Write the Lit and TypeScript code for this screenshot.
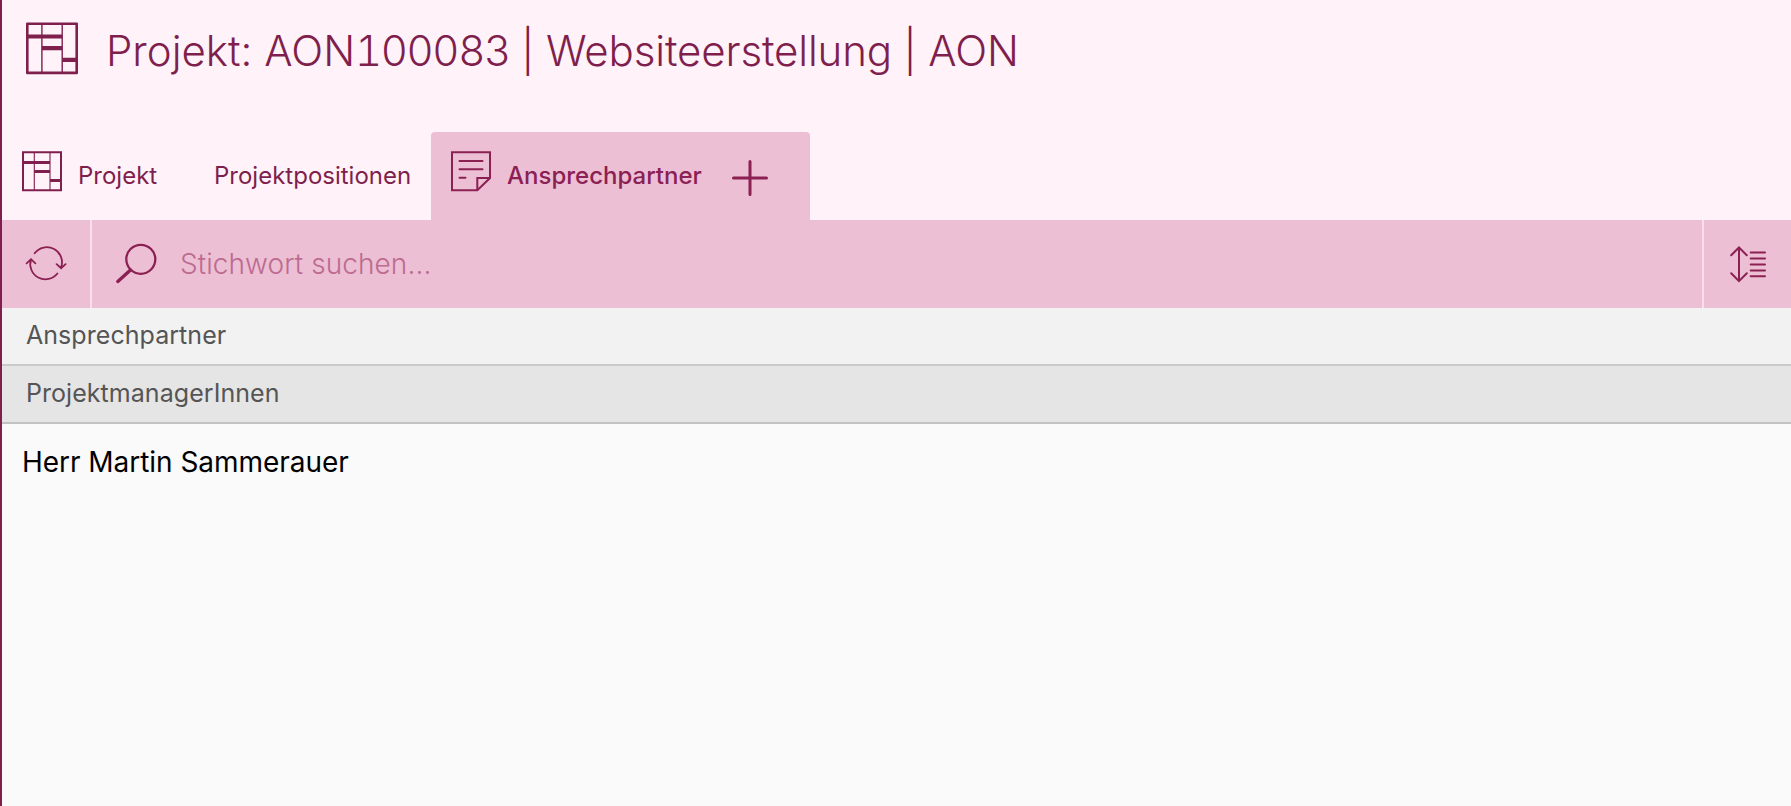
import { LitElement, html, css } from "lit";
import { customElement } from "lit/decorators.js";

const projectIcon = html`<svg viewBox="0 0 40 41" width="40" height="41">
  <path d="M1 1.2H39V39.3H1Z" stroke-width="2"/><path d="M12.3 1V39M28 1V39" stroke-width="1.1"/>
  <path d="M1 11.5H28M12.3 20.5H28M28 29.5H39" stroke-width="3"/></svg>`;

const projectIconLarge = html`<svg viewBox="0 0 52 53" width="52" height="53">
  <path d="M1.3 1.7H50.7V50.9H1.3Z" stroke-width="2.6" stroke-linejoin="round"/>
  <path d="M15.9 2V50M36.2 2V50" stroke-width="1.4"/>
  <path d="M1.4 14.5H36.2M15.9 26.1H36.2M36.2 37.9H50.6" stroke-width="4.2"/></svg>`;

const noteIcon = html`<svg viewBox="0 0 40 41" width="40" height="41" stroke-width="2">
  <path d="M1 1.2H39V27L26.3 39.3H1Z"/><path d="M26.3 39.3V27H39"/>
  <path d="M8.5 10H31.5M8.5 18.3H31.5M8.5 26.8H14.5" stroke-linecap="round"/></svg>`;

const plusIcon = html`<svg viewBox="0 0 36 36" width="36" height="36" stroke-width="3" stroke-linecap="round">
  <path d="M1.5 18H34.5M18 1.5V34.5"/></svg>`;

const refreshIcon = html`<svg viewBox="0 0 44 36" width="44" height="36" stroke-width="1.8" stroke-linecap="round">
  <path d="M10.6 7.3A15.2 15.2 0 0 1 37 21.8M32.6 18.2L37.1 22.2L41.6 18.2"/>
  <path d="M33.4 27.5A15.2 15.2 0 0 1 7 13.4M2.6 17.3L7 13.2L11.4 17.3"/></svg>`;

const searchIcon = html`<svg viewBox="0 0 42 42" width="42" height="42">
  <circle cx="25.8" cy="16.3" r="14.5" stroke-width="2.3"/>
  <path d="M15.5 27L2.8 38.4" stroke-width="3.4" stroke-linecap="round"/></svg>`;

const sortIcon = html`<svg viewBox="0 0 36 38" width="36" height="38" stroke-width="2" stroke-linecap="round">
  <path d="M9 2.5V36.1M1.2 10.3L9 2.5L16.8 10.3M1.2 28.3L9 36.1L16.8 28.3"/>
  <path d="M20.7 7.4H35M20.7 13.4H35M20.7 19.4H35M20.7 25.4H35M20.7 31.2H35"/></svg>`;

@customElement("app-root")
export class AppRoot extends LitElement {
  static styles = css`
    :host { display: block; font-family: Inter, "Liberation Sans", sans-serif; color: #7f1f4d; }
    * { box-sizing: border-box; }
    svg { display: block; fill: none; stroke: currentColor; flex: none; }
    .page { height: 806px; display: flex; flex-direction: column; border-left: 2px solid #7f1f4d; background: #fafafa; overflow: hidden; }
    header { height: 132px; background: #fff2f8; display: flex; padding: 22px 0 0 24px; gap: 28px; }
    h1 { margin: 0; padding-top: 3px; font-size: 42px; line-height: 52px; font-weight: 300; white-space: nowrap; letter-spacing: -0.13px; }
    .kind { letter-spacing: 0; }
    .number { font-variant-numeric: tabular-nums; letter-spacing: -1.4px; }
    nav { height: 88px; background: #fff2f8; display: flex; font-size: 24px; line-height: 30px; }
    .tab { display: flex; padding: 19px 20px 0; gap: 16px; white-space: nowrap; }
    .label { padding-top: 10px; }
    .first { width: 192px; }
    .second { width: 237px; }
    .active { width: 379px; background: #ecbfd4; border-radius: 4px 4px 0 0; font-weight: 500; color: #8b2053; }
    .plus { margin: 9px 0 0 14px; }
    .bar { flex: none; height: 88px; background: #ecbfd4; display: flex; color: #8b2053; }
    .btn { height: 88px; width: 90px; padding: 26px 0 0 22px; border-right: 2px solid #fadfeb; }
    .sort { width: 89px; padding: 25px 0 0 26px; border-right: 0; border-left: 2px solid #fadfeb; }
    .search { flex: 1; display: flex; gap: 23px; padding: 23px 0 0 23px; }
    .placeholder { font-size: 28px; line-height: 42px; font-weight: 300; color: #bd6b90; letter-spacing: 0.08px; }
    .row { flex: none; height: 58px; background: #f2f2f2; border-bottom: 2px solid #cacaca; color: #555; font-size: 25px; line-height: 54px; padding-left: 24px; letter-spacing: 0.05px; }
    .group { background: #e5e5e5; border-color: #c2c2c2; }
    .item { color: #000; font-size: 28px; line-height: 34px; padding: 21px 0 0 20px; letter-spacing: -0.04px; }
  `;

  render() {
    return html`<div class="page">
      <header>${projectIconLarge}<h1><span class="kind">Projekt: AON</span><span class="number">100083</span> | Websiteerstellung | AON</h1></header>
      <nav>
        <div class="tab first">${projectIcon}<span class="label">Projekt</span></div>
        <div class="tab second"><span class="label">Projektpositionen</span></div>
        <div class="tab active">${noteIcon}<span class="label">Ansprechpartner</span><span class="plus">${plusIcon}</span></div>
      </nav>
      <div class="bar">
        <div class="btn">${refreshIcon}</div>
        <div class="search">${searchIcon}<span class="placeholder">Stichwort suchen...</span></div>
        <div class="btn sort">${sortIcon}</div>
      </div>
      <div class="row">Ansprechpartner</div>
      <div class="row group">ProjektmanagerInnen</div>
      <div class="item">Herr Martin Sammerauer</div>
    </div>`;
  }
}
